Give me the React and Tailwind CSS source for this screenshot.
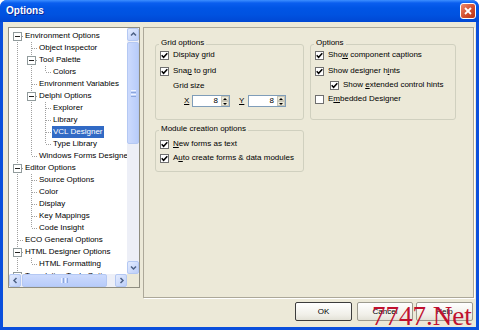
import React from 'react';

const rows = [
  ['Environment Options', 0, true],
  ['Object Inspector', 1],
  ['Tool Palette', 1, true],
  ['Colors', 2],
  ['Environment Variables', 1],
  ['Delphi Options', 1, true],
  ['Explorer', 2],
  ['Library', 2],
  ['VCL Designer', 2, false, true],
  ['Type Library', 2],
  ['Windows Forms Designer', 1],
  ['Editor Options', 0, true],
  ['Source Options', 1],
  ['Color', 1],
  ['Display', 1],
  ['Key Mappings', 1],
  ['Code Insight', 1],
  ['ECO General Options', 0],
  ['HTML Designer Options', 0, true],
  ['HTML Formatting', 1],
  ['Translation Tools Options', 0, true],
];

const lv = rows.map((r) => r[1]);

function hasNext(i) {
  for (let j = i + 1; j < lv.length; j++) {
    if (lv[j] < lv[i]) return false;
    if (lv[j] === lv[i]) return true;
  }
  return lv[i] === 0;
}

function ancestor(i, k) {
  for (let j = i - 1; j >= 0; j--) if (lv[j] === k) return j;
  return -1;
}

const DOT = { stroke: '#A0A0A0', strokeWidth: 1, strokeDasharray: '1 1' };

function ContCell({ on }) {
  return (
    <svg width="14" height="12" className="shrink-0 block">
      {on && <line x1="7.5" y1="0" x2="7.5" y2="12" {...DOT} />}
    </svg>
  );
}

function OwnCell({ top, bottom, box }) {
  return (
    <svg width="14" height="12" className="shrink-0 block">
      {top && <line x1="7.5" y1="0" x2="7.5" y2="6" {...DOT} />}
      {bottom && <line x1="7.5" y1="6" x2="7.5" y2="12" {...DOT} />}
      <line x1="8" y1="6.5" x2="14" y2="6.5" {...DOT} />
      {box && (
        <g>
          <rect x="3.5" y="2.5" width="8" height="8" fill="#fff" stroke="#919B9C" />
          <line x1="5" y1="6.5" x2="10" y2="6.5" stroke="#222" strokeWidth="1" />
        </g>
      )}
    </svg>
  );
}

function TreeRow({ i }) {
  const [text, level, box, sel] = rows[i];
  const cells = [];
  for (let k = 0; k < level; k++) {
    const a = ancestor(i, k);
    cells.push(<ContCell key={k} on={a >= 0 && hasNext(a)} />);
  }
  return (
    <div className="flex h-[12px] items-center">
      {cells}
      <OwnCell top={i !== 0} bottom={hasNext(i)} box={box} />
      <span
        className={
          sel
            ? 'px-[1px] leading-[12px] h-[12px] whitespace-nowrap bg-[#316AC5] text-white'
            : 'px-[1px] leading-[12px] h-[12px] whitespace-nowrap text-black'
        }
      >
        {text}
      </span>
    </div>
  );
}

const arrows = {
  up: 'M2 5.5 L4.5 3 L7 5.5',
  down: 'M2 3.5 L4.5 6 L7 3.5',
  left: 'M5.5 2 L3 4.5 L5.5 7',
  right: 'M3.5 2 L6 4.5 L3.5 7',
};

function SbBtn({ dir, cls }) {
  return (
    <div
      className={
        'rounded-[2px] border border-[#B4C8F3] bg-[linear-gradient(135deg,#E4ECFE,#BCCEF9)] flex items-center justify-center shrink-0 ' +
        cls
      }
    >
      <svg width="9" height="9" viewBox="0 0 9 9">
        <path d={arrows[dir]} fill="none" stroke="#4D6185" strokeWidth="1.5" />
      </svg>
    </div>
  );
}

function Check({ checked }) {
  return (
    <span className="w-[9px] h-[9px] shrink-0 border border-[#6F6F6F] bg-white flex items-center justify-center">
      {checked && (
        <svg width="7" height="7" viewBox="0 0 7 7">
          <path d="M0.7 3.3 L2.6 5.3 L6.3 1.3" fill="none" stroke="#000" strokeWidth="1.5" />
        </svg>
      )}
    </span>
  );
}

function CheckRow({ checked, children, cls }) {
  return (
    <div className={'flex items-center h-[14px] gap-[4px] ' + (cls || '')}>
      <Check checked={checked} />
      <span className="leading-[14px] whitespace-nowrap">{children}</span>
    </div>
  );
}

function Spin() {
  return (
    <div className="flex w-[38px] h-[12px] border border-[#7F9DB9] bg-white">
      <div className="flex-1 text-right pr-[3px] leading-[10px]">8</div>
      <div className="w-[8px] flex flex-col">
        <div className="h-[5px] bg-[#ECE9D8] border border-[#C9C6B6] flex items-center justify-center">
          <svg width="4" height="2" viewBox="0 0 4 2">
            <path d="M0 2 L2 0 L4 2 Z" fill="#000" />
          </svg>
        </div>
        <div className="h-[5px] bg-[#ECE9D8] border border-[#C9C6B6] flex items-center justify-center">
          <svg width="4" height="2" viewBox="0 0 4 2">
            <path d="M0 0 L2 2 L4 0 Z" fill="#000" />
          </svg>
        </div>
      </div>
    </div>
  );
}

function Group({ label, cls, children }) {
  return (
    <div className={'relative border border-[#D0D0BF] rounded-[3px] ' + cls}>
      <span className="absolute -top-[7px] left-[3px] px-[2px] bg-[#ECE9D8] leading-[10px] whitespace-nowrap">
        {label}
      </span>
      {children}
    </div>
  );
}

function Btn({ children, dflt, cls }) {
  return (
    <div
      className={
        (dflt
          ? 'border border-[#3C3C3C] '
          : 'border border-[#9C9A8E] ') +
        'h-[19px] rounded-[2px] bg-[linear-gradient(to_bottom,#FFFFFF,#F0EFE8_70%,#E3E1D6)] flex items-center justify-center ' +
        cls
      }
    >
      {children}
    </div>
  );
}

export default function App() {
  return (
    <div className="w-[479px] h-[330px] bg-white font-['Liberation_Sans',Arial,sans-serif] text-[8px] text-black">
      <div className="w-[479px] h-[330px] rounded-t-[7px] overflow-hidden bg-[#0A4FDC] flex flex-col relative">
        {/* title bar */}
        <div className="h-[22px] shrink-0 flex items-center justify-between pl-[6px] pr-[3px] bg-[linear-gradient(to_bottom,#3D8FFF_0px,#0A5EEF_3px,#0055E5_8px,#0052E0_15px,#0047D3_22px)]">
          <span className="text-white font-bold text-[10px] leading-[12px] [text-shadow:1px_1px_0_#0B2A9A]">
            Options
          </span>
          <div className="w-[16px] h-[16px] rounded-[3px] border border-white bg-[linear-gradient(135deg,#EE8A6C,#D24E2E_55%,#B93515)] flex items-center justify-center">
            <svg width="8" height="8" viewBox="0 0 8 8">
              <path d="M1 1 L7 7 M7 1 L1 7" stroke="#fff" strokeWidth="1.8" />
            </svg>
          </div>
        </div>

        {/* body */}
        <div className="flex-1 mx-[3px] mb-[3px] bg-[#ECE9D8] flex flex-col pt-[5px] pl-[5px]">
          <div className="flex items-start gap-[3px]">
            {/* tree */}
            <div className="w-[132px] h-[261px] border border-[#8F8D80] bg-white flex flex-col">
              <div className="flex h-[246px]">
                <div className="w-[118px] overflow-hidden pt-[2px] pl-[1px]">
                  {rows.map((_, i) => (
                    <TreeRow key={i} i={i} />
                  ))}
                </div>
                <div className="w-[12px] flex flex-col bg-[#EDEFF7]">
                  <SbBtn dir="up" cls="h-[13px]" />
                  <div className="flex-1 flex flex-col pt-[1px]">
                    <div className="h-[102px] rounded-[2px] border border-[#B4C8F3] bg-[linear-gradient(to_right,#CCDAFD,#B8CCFA)] flex flex-col items-center justify-center gap-[1px]">
                      <div className="w-[5px] h-[1px] bg-[#EEF3FF]" />
                      <div className="w-[5px] h-[1px] bg-[#8CA6DD]" />
                      <div className="w-[5px] h-[1px] bg-[#EEF3FF]" />
                      <div className="w-[5px] h-[1px] bg-[#8CA6DD]" />
                    </div>
                  </div>
                  <SbBtn dir="down" cls="h-[13px]" />
                </div>
              </div>
              <div className="flex h-[13px]">
                <div className="w-[118px] flex bg-[#EDEFF7]">
                  <SbBtn dir="left" cls="w-[12px]" />
                  <div className="ml-[1px] w-[85px] rounded-[2px] border border-[#B4C8F3] bg-[linear-gradient(to_bottom,#CCDAFD,#B8CCFA)] flex items-center justify-center gap-[1px]">
                    <div className="w-[1px] h-[5px] bg-[#EEF3FF]" />
                    <div className="w-[1px] h-[5px] bg-[#8CA6DD]" />
                    <div className="w-[1px] h-[5px] bg-[#EEF3FF]" />
                    <div className="w-[1px] h-[5px] bg-[#8CA6DD]" />
                  </div>
                  <div className="flex-1" />
                  <SbBtn dir="right" cls="w-[12px]" />
                </div>
                <div className="w-[12px] bg-[#ECE9D8]" />
              </div>
            </div>

            {/* right frame */}
            <div className="w-[331px] h-[271px] border border-[#ACA899] shadow-[1px_1px_0_#fff] pl-[11px] pt-[16px] flex gap-[6px]">
              <div className="w-[149px] flex flex-col">
                <Group label="Grid options" cls="h-[76px] pl-[4px] pt-[3px]">
                  <CheckRow checked>Display grid</CheckRow>
                  <CheckRow checked cls="mt-[2px]">
                    Sna<span className="underline">p</span> to grid
                  </CheckRow>
                  <div className="h-[14px] leading-[14px] ml-[13px] mt-[1px]">Grid size</div>
                  <div className="flex items-center h-[12px] mt-[2px] ml-[24px]">
                    <span className="underline w-[8px]">X</span>
                    <Spin />
                    <span className="underline ml-[9px] w-[9px]">Y</span>
                    <Spin />
                  </div>
                </Group>
                <Group label="Module creation options" cls="h-[42px] mt-[10px] pl-[4px] pt-[6px]">
                  <CheckRow checked>
                    <span className="underline">N</span>ew forms as text
                  </CheckRow>
                  <CheckRow checked>
                    A<span className="underline">u</span>to create forms &amp; data modules
                  </CheckRow>
                </Group>
              </div>
              <div className="w-[146px] flex flex-col">
                <Group label="Options" cls="h-[76px] pl-[4px] pt-[3px]">
                  <CheckRow checked>
                    Sho<span className="underline">w</span> component captions
                  </CheckRow>
                  <CheckRow checked cls="mt-[2px]">
                    Show designer h<span className="underline">i</span>nts
                  </CheckRow>
                  <CheckRow checked cls="ml-[15px]">
                    Show <span className="underline">e</span>xtended control hints
                  </CheckRow>
                  <CheckRow>
                    E<span className="underline">m</span>bedded Designer
                  </CheckRow>
                </Group>
              </div>
            </div>
          </div>

          {/* buttons */}
          <div className="flex justify-end pr-[3px] mt-[4px]">
            <Btn dflt cls="w-[57px]">OK</Btn>
            <Btn cls="w-[56px] ml-[5px]">Cancel</Btn>
            <Btn cls="w-[57px] ml-[3px]">Help</Btn>
          </div>
        </div>

        {/* watermark */}
        <div className="absolute left-[372px] top-[303px] text-[27px] leading-[27px] text-[#C0102E] font-['Liberation_Serif',serif] whitespace-nowrap">
          7747.Net
        </div>
      </div>
    </div>
  );
}
